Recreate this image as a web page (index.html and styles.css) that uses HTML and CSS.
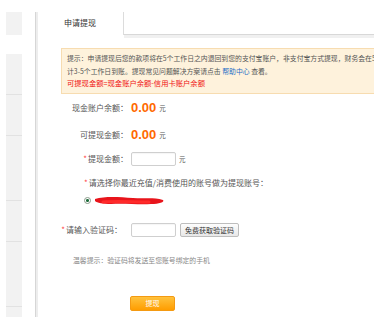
FILE: index.html
```
<!DOCTYPE html>
<html lang="zh-CN">
<head>
  <meta charset="UTF-8" />
  <meta name="viewport" content="width=device-width,initial-scale=1.0"/>
  <title>申请提现</title>
  <link rel="stylesheet" href="styles.css">
</head>
<body>
  <div class="page">
    <div class="side">
      <div class="side-top"></div>
      <div class="side-list">
        <div class="side-item"></div>
        <div class="side-item"></div>
        <div class="side-item tall"></div>
        <div class="side-item"></div>
        <div class="side-item tall"></div>
      </div>
    </div>
    <div class="main">
      <div class="tabs">
        <div class="tab active">申请提现</div>
        <div class="tab-rest"></div>
      </div>
      <div class="content">
        <div class="notice">
          提示：申请提现后您的款项将在5个工作日之内退回到您的支付宝账户，非支付宝方式提现，财务会在5个工作日之内审核处理，预<br>
          计3-5个工作日到账。提现常见问题解决方案请点击 <a href="#" class="link">帮助中心</a> 查看。<br>
          <span class="red">可提现金额=现金账户余额-信用卡账户余额</span>
        </div>
        <form class="form" onsubmit="return false">
          <div class="row r1">
            <label class="label">现金账户余额：</label>
            <span class="money">0.00</span><span class="unit">元</span>
          </div>
          <div class="row r2">
            <label class="label">可提现金额：</label>
            <span class="money">0.00</span><span class="unit">元</span>
          </div>
          <div class="row r3">
            <label class="label"><i class="star">*</i>提现金额：</label>
            <input class="field" type="text">
            <span class="unit">元</span>
          </div>
          <div class="row r4 wide">
            <i class="star">*</i>请选择你最近充值/消费使用的账号做为提现账号：
          </div>
          <div class="row r5 account">
            <span class="radio"></span>
            <svg class="scribble" width="74" height="14" viewBox="0 0 74 14">
              <path d="M2 5 C12 2 26 3 40 4 C52 5 60 3 70 6 C72 8 66 10 58 10 C46 11 32 9 18 10 C10 10 4 9 2 7 Z" fill="#e8141b"/>
              <path d="M10 8 C24 7 40 8 56 8" stroke="#ff2a2a" stroke-width="3" fill="none" stroke-linecap="round"/>
            </svg>
          </div>
          <div class="row r6">
            <label class="label short"><i class="star">*</i>请输入验证码：</label>
            <input class="field" type="text">
            <button class="code-btn" type="button">免费获取验证码</button>
          </div>
          <div class="row r7 tip">温馨提示：验证码将发送至您账号绑定的手机</div>
          <div class="row r8">
            <button class="submit-btn" type="submit">提现</button>
          </div>
        </form>
      </div>
    </div>
  </div>
</body>
</html>
```

FILE: styles.css
```
html, body {
  margin: 0;
  background: #fff;
  font-family: "Noto Sans CJK SC", "Liberation Sans", sans-serif;
  color: #444;
}
.page {
  display: flex;
  width: 374px;
  height: 317px;
  overflow: hidden;
}
.side {
  width: 16px;
  margin-left: 6px;
  margin-right: 13px;
  padding-top: 12px;
  display: flex;
  flex-direction: column;
}
.side-top {
  height: 23px;
  background: #f2f2f2;
}
.side-list {
  margin-top: 19px;
  flex: 1;
  background: #f2f2f2;
  display: flex;
  flex-direction: column;
}
.side-item {
  height: 40px;
  border-bottom: 1px solid #e2e2e2;
}
.side-item.tall {
  height: 64px;
}
.main {
  flex: 1;
  min-width: 0;
  margin-top: 12px;
  border-left: 1px solid #d6d6d6;
  box-shadow: inset 2px 0 0 #ededed;
  display: flex;
  flex-direction: column;
}
.tabs {
  display: flex;
  height: 23px;
}
.tab {
  width: 86px;
  margin-left: 1px;
  border-right: 1px solid #dcdcdc;
  text-align: center;
  font-size: 8px;
  line-height: 22px;
  color: #333;
}
.tab-rest {
  flex: 1;
  border-bottom: 1px solid #d8d8d8;
  box-shadow: 0 3px 0 #f0f0f0;
}
.content {
  flex: 1;
  padding-left: 25px;
}
.notice {
  margin-top: 13px;
  width: 340px;
  box-sizing: border-box;
  padding: 3px 0 3px 5px;
  background: #fef2dc;
  border: 1px solid #f7dcb0;
  border-right: none;
  font-size: 6.85px;
  line-height: 12.5px;
  color: #555;
  white-space: nowrap;
  overflow: hidden;
}
.link {
  color: #1f6fc5;
  text-decoration: none;
}
.red {
  color: #f01010;
  font-size: 7.3px;
}
.form {
  margin: 0;
  margin-left: -25px;
  display: flex;
  flex-direction: column;
}
.row {
  height: 16px;
  display: flex;
  align-items: center;
  font-size: 8px;
  color: #555;
}
.r1 { margin-top: 6px; }
.r2 { margin-top: 11px; }
.r3 { margin-top: 8px; }
.r4 { margin-top: 8px; }
.r5 { margin-top: 2px; }
.r6 { margin-top: 13px; }
.r7 { margin-top: 14px; }
.r8 { margin-top: 28px; height: 15px; }
.label {
  width: 95px;
  text-align: right;
  padding-right: 3px;
  box-sizing: border-box;
}
.label.short {
  padding-right: 9px;
}
.star {
  font-style: normal;
  color: #f44;
  margin-right: 1px;
}
.money {
  font-family: "Liberation Sans", Arial, sans-serif;
  font-weight: bold;
  font-size: 13px;
  color: #ff6a00;
}
.unit {
  font-size: 6.5px;
  margin-left: 3px;
  color: #555;
}
.field {
  width: 45px;
  height: 14px;
  box-sizing: border-box;
  border: 1px solid #cfcfcf;
  border-radius: 2px;
  padding: 0 3px;
  margin: 0;
  font-size: 8px;
  box-shadow: inset 0 1px 1px rgba(0,0,0,0.04);
}
.wide {
  padding-left: 48px;
}
.account {
  padding-left: 48px;
}
.radio {
  width: 5px;
  height: 5px;
  border: 1px solid #8a9a8a;
  border-radius: 50%;
  background: radial-gradient(circle, #1d6b3a 0 1.3px, #fff 1.6px);
}
.scribble {
  margin-left: 2px;
}
.code-btn {
  margin-left: 4px;
  height: 14px;
  padding: 0 4px;
  border: 1px solid #bdbdbd;
  border-radius: 2px;
  background: linear-gradient(#fdfdfd, #e8e8e8);
  font-family: inherit;
  font-size: 7px;
  color: #333;
  line-height: 12px;
}
.tip {
  padding-left: 37px;
  font-size: 6.85px;
  color: #888;
}
.submit-btn {
  margin-left: 94px;
  width: 45px;
  height: 15px;
  padding: 0;
  border: 1px solid #f49a12;
  border-radius: 2px;
  background: linear-gradient(#ffc23d, #ff9d00);
  color: #fff;
  font-family: inherit;
  font-size: 7px;
  cursor: pointer;
}
```
